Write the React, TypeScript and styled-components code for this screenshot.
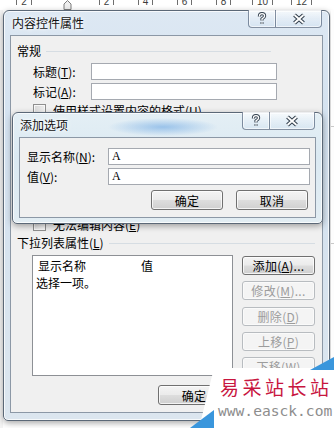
import React from 'react'
import styled, { createGlobalStyle } from 'styled-components'

const GlobalStyle = createGlobalStyle`
	html, body {
		margin: 0;
		padding: 0;
		background: #fff;
	}
	body {
		font-family: "Noto Sans CJK SC", sans-serif;
		font-size: 12px;
		color: #000;
	}
	* {
		box-sizing: border-box;
	}
`

const Screen = styled.div`
	position: relative;
	width: 334px;
	height: 428px;
	overflow: hidden;
	background: #fff;
`

const Ruler = styled.div`
	display: flex;
	height: 10px;
	overflow: hidden;
	background: #fff;
`

const RulerCell = styled.div<{ $w?: number }>`
	flex: none;
	width: ${p => p.$w ?? 39}px;
	display: flex;
	justify-content: center;
	align-items: flex-start;
	gap: 4px;
	margin-top: -4px;
	font-family: 'Liberation Sans', sans-serif;
	font-size: 10px;
	line-height: 11px;
	color: #3c3c3c;
`

const Tick = styled.span`
	width: 1px;
	height: 9px;
	background: #6e6e6e;
`

const Desk = styled.div`
	display: flex;
	height: 418px;
`

const Gutter = styled.div`
	flex: none;
	width: 3px;
	background: #f4f4f4;
`

const DocStrip = styled.div`
	flex: 1;
	margin-left: 1px;
	background: repeating-linear-gradient(
		to bottom,
		#fdfdfd 0,
		#fdfdfd 116px,
		#c9c9c9 116px,
		#c9c9c9 117px
	);
`

const Window = styled.div`
	flex: none;
	display: flex;
	flex-direction: column;
	border: 1px solid #5b6877;
	border-radius: 6px 6px 5px 5px;
	background: linear-gradient(180deg, #dde8f3 0%, #d3e1ef 30%, #dce6ef 100%);
	box-shadow: 0 2px 6px rgba(0, 0, 0, 0.35), inset 0 0 0 1px rgba(255, 255, 255, 0.75);
	padding: 0 6px 7px 6px;
`

const MainWindow = styled(Window)`
	width: 327px;
	height: 411px;
`

const OptionWindow = styled(Window)`
	position: absolute;
	left: 12px;
	top: 112px;
	width: 311px;
	height: 112px;
	padding-bottom: 5px;
	background:
		radial-gradient(ellipse 55px 9px at 150px 14px, rgba(96, 160, 226, 0.55), rgba(96, 160, 226, 0) 100%),
		linear-gradient(180deg, #e4eff5 0%, #dbe9f2 40%, #e2edf3 100%);
`

const TitleBar = styled.div`
	flex: none;
	height: 24px;
	display: flex;
	justify-content: space-between;
	align-items: flex-start;
`

const Title = styled.div<{ $indent: number }>`
	padding-left: ${p => p.$indent}px;
	line-height: 24px;
	color: #111;
	text-shadow: 0 0 6px #fff, 0 0 3px #fff;
`

const Captions = styled.div`
	display: flex;
	margin-top: -1px;
	margin-right: 1px;
`

const CaptionButton = styled.div<{ $w: number; $first?: boolean }>`
	width: ${p => p.$w}px;
	height: 18px;
	display: flex;
	align-items: center;
	justify-content: center;
	border: 1px solid rgba(58, 76, 102, 0.6);
	border-top: none;
	border-left-width: ${p => (p.$first ? 1 : 0)}px;
	border-radius: ${p => (p.$first ? '0 0 0 4px' : '0 0 4px 0')};
	background: linear-gradient(180deg, rgba(255, 255, 255, 0.75) 0%, rgba(232, 240, 248, 0.6) 50%, rgba(208, 224, 240, 0.55) 100%);
	box-shadow: inset 0 0 0 1px rgba(255, 255, 255, 0.6);
`

const Client = styled.div`
	flex: 1;
	display: flex;
	flex-direction: column;
	border: 1px solid #8c98a6;
	background: #f0f0f0;
`

const MainClient = styled(Client)`
	padding: 0 7px 0 6px;
`

const OptionClient = styled(Client)`
	padding: 10px 5px 0 7px;
	gap: 3px;
`

const SectionHead = styled.div<{ $top: number; $lineEnd?: number }>`
	display: flex;
	align-items: center;
	height: 14px;
	margin-top: ${p => p.$top}px;
	line-height: 14px;
	&::after {
		content: '';
		flex: 1;
		height: 1px;
		margin-left: 5px;
		margin-right: ${p => p.$lineEnd ?? 0}px;
		background: #d6dde3;
	}
`

const FieldRow = styled.div<{ $top?: number; $indent: number }>`
	display: flex;
	align-items: center;
	height: 17px;
	margin-top: ${p => p.$top ?? 0}px;
	padding-left: ${p => p.$indent}px;
`

const FieldLabel = styled.label<{ $w: number }>`
	flex: none;
	width: ${p => p.$w}px;
	line-height: 17px;
`

const TextBox = styled.div<{ $w?: number }>`
	${p => (p.$w ? `width: ${p.$w}px; flex: none;` : 'flex: 1;')}
	height: 17px;
	border: 1px solid #a5a9b0;
	background: #fff;
	padding-left: 3px;
	font-family: 'Liberation Serif', serif;
	font-size: 12px;
	line-height: 15px;
`

const CheckRow = styled.div<{ $top: number }>`
	display: flex;
	align-items: center;
	gap: 7px;
	height: 13px;
	margin-top: ${p => p.$top}px;
	padding-left: 16px;
	line-height: 13px;
`

const CheckBox = styled.span`
	flex: none;
	width: 13px;
	height: 13px;
	border: 1px solid #8f8f8f;
	background: linear-gradient(135deg, #d4d4d4 0%, #f2f2f2 70%, #fff 100%);
	box-shadow: inset 0 0 0 1px #f8f8f8;
`

const Key = styled.span`
	text-decoration: underline;
`

const ListArea = styled.div`
	display: flex;
	height: 121px;
	margin-top: 5px;
	padding-left: 15px;
`

const ListBox = styled.div`
	flex: none;
	width: 201px;
	border: 1px solid #8d9095;
	background: #fff;
	padding-left: 3px;
`

const ListHeader = styled.div`
	display: flex;
	height: 20px;
	padding-left: 2px;
	line-height: 20px;
`

const HeaderCell = styled.div<{ $w?: number }>`
	${p => (p.$w ? `width: ${p.$w}px;` : 'flex: 1;')}
`

const ListItem = styled.div`
	height: 14px;
	line-height: 14px;
`

const SideButtons = styled.div`
	display: flex;
	flex-direction: column;
	gap: 6.25px;
	margin-left: 9px;
	margin-top: 1px;
	width: 79px;
`

const Button = styled.div<{ $w?: number; $disabled?: boolean }>`
	flex: none;
	${p => (p.$w ? `width: ${p.$w}px;` : '')}
	height: ${p => (p.$w ? 20 : 19)}px;
	display: flex;
	align-items: center;
	justify-content: center;
	border: 1px solid ${p => (p.$disabled ? '#b8bcc0' : '#707070')};
	border-radius: 3px;
	background: ${p =>
		p.$disabled
			? '#f4f4f4'
			: 'linear-gradient(180deg, #f4f4f4 0%, #ebebeb 48%, #dddddd 52%, #cfcfcf 100%)'};
	box-shadow: inset 0 0 0 1px ${p => (p.$disabled ? '#fafafa' : 'rgba(255, 255, 255, 0.75)')};
	color: ${p => (p.$disabled ? '#9c9c9c' : '#000')};
	line-height: 17px;
	letter-spacing: 0.3px;
`

const ButtonRow = styled.div<{ $top: number; $gap: number; $right?: number }>`
	display: flex;
	justify-content: flex-end;
	gap: ${p => p.$gap}px;
	margin-top: ${p => p.$top}px;
	margin-right: ${p => p.$right ?? 0}px;
`

const Watermark = styled.div`
	position: absolute;
	left: 190px;
	top: 355px;
	width: 144px;
	height: 73px;
	padding: 20px 0 0 30px;
	display: flex;
	flex-direction: column;
`

const WatermarkShape = styled.svg`
	position: absolute;
	inset: 0;
`

const SiteName = styled.div`
	position: relative;
	font-family: 'Noto Sans CJK SC', sans-serif;
	font-size: 19px;
	line-height: 24px;
	letter-spacing: 3.5px;
	color: #c8163f;
	white-space: nowrap;
`

const SiteUrl = styled.div`
	position: relative;
	margin-left: -2px;
	margin-top: 5px;
	font-family: 'DejaVu Sans Mono', monospace;
	font-size: 14.6px;
	line-height: 14px;
	color: #8d8d8d;
	white-space: nowrap;
`

const HelpGlyph = () => (
	<svg width="10" height="13" viewBox="0 0 10 13">
		<path
			d="M2.4 4.4 Q2.4 1.6 5 1.6 Q7.6 1.6 7.6 4 Q7.6 5.4 5 6.9 L5 8.4 M5 10.3 L5 11.7"
			fill="none"
			stroke="#34414f"
			strokeWidth="3.2"
		/>
		<path
			d="M2.4 4.4 Q2.4 1.6 5 1.6 Q7.6 1.6 7.6 4 Q7.6 5.4 5 6.9 L5 8.4 M5 10.3 L5 11.7"
			fill="none"
			stroke="#fff"
			strokeWidth="1.3"
		/>
	</svg>
)

const CloseGlyph = () => (
	<svg width="14" height="12" viewBox="0 0 14 12">
		<path d="M2.5 2 L11.5 10 M11.5 2 L2.5 10" stroke="#34414f" strokeWidth="4" />
		<path d="M2.5 2 L11.5 10 M11.5 2 L2.5 10" stroke="#fff" strokeWidth="1.8" />
	</svg>
)

const RulerMarker = () => (
	<svg width="9" height="10" viewBox="0 0 9 10" style={{ marginTop: 4 }}>
		<path d="M1 9.5 L1 4 L4.5 0.5 L8 4 L8 9.5 Z" fill="#eeeeee" stroke="#7d7d7d" />
	</svg>
)

const Captions2 = ({ help, close }: { help: number; close: number }) => (
	<Captions>
		<CaptionButton $w={help} $first>
			<HelpGlyph />
		</CaptionButton>
		<CaptionButton $w={close}>
			<CloseGlyph />
		</CaptionButton>
	</Captions>
)

const rulerNumbers = ['4', '6', '8', '10', '12']

const App = () => (
	<Screen>
		<GlobalStyle />
		<Ruler>
			<RulerCell $w={48}>
				<Tick />
				<span>2</span>
				<Tick />
			</RulerCell>
			<RulerCell>
				<RulerMarker />
			</RulerCell>
			<RulerCell>
				<Tick />
				<span>2</span>
				<Tick />
			</RulerCell>
			{rulerNumbers.map(n => (
				<RulerCell key={n}>
					<Tick />
					<span>{n}</span>
					<Tick />
				</RulerCell>
			))}
		</Ruler>

		<Desk>
			<Gutter />
			<MainWindow>
				<TitleBar>
					<Title $indent={2}>内容控件属性</Title>
					<Captions2 help={28} close={46} />
				</TitleBar>
				<MainClient>
					<SectionHead $top={8} $lineEnd={44}>
						常规
					</SectionHead>
					<FieldRow $top={5} $indent={16}>
						<FieldLabel $w={58}>
							标题(<Key>T</Key>):
						</FieldLabel>
						<TextBox $w={186} />
					</FieldRow>
					<FieldRow $top={3} $indent={16}>
						<FieldLabel $w={58}>
							标记(<Key>A</Key>):
						</FieldLabel>
						<TextBox $w={186} />
					</FieldRow>
					<CheckRow $top={4}>
						<CheckBox />
						<span>
							使用样式设置内容的格式(<Key>U</Key>)
						</span>
					</CheckRow>
					<SectionHead $top={55}>锁定</SectionHead>
					<CheckRow $top={10}>
						<CheckBox />
						<span>
							无法删除内容控件(<Key>D</Key>)
						</span>
					</CheckRow>
					<CheckRow $top={9}>
						<CheckBox />
						<span>
							无法编辑内容(<Key>E</Key>)
						</span>
					</CheckRow>
					<SectionHead $top={5}>
						<span>
							下拉列表属性(<Key>L</Key>)
						</span>
					</SectionHead>
					<ListArea>
						<ListBox>
							<ListHeader>
								<HeaderCell $w={103}>显示名称</HeaderCell>
								<HeaderCell>值</HeaderCell>
							</ListHeader>
							<ListItem>选择一项。</ListItem>
						</ListBox>
						<SideButtons>
							<Button>
								添加(<Key>A</Key>)...
							</Button>
							<Button $disabled>
								修改(<Key>M</Key>)...
							</Button>
							<Button $disabled>
								删除(<Key>D</Key>)
							</Button>
							<Button $disabled>
								上移(<Key>P</Key>)
							</Button>
							<Button $disabled>
								下移(<Key>W</Key>)
							</Button>
						</SideButtons>
					</ListArea>
					<ButtonRow $top={9} $gap={7}>
						<Button $w={72}>确定</Button>
						<Button $w={78}>取消</Button>
					</ButtonRow>
				</MainClient>
			</MainWindow>
			<DocStrip />
		</Desk>

		<OptionWindow>
			<TitleBar>
				<Title $indent={1}>添加选项</Title>
				<Captions2 help={28} close={45} />
			</TitleBar>
			<OptionClient>
				<FieldRow $indent={0}>
					<FieldLabel $w={81}>
						显示名称(<Key>N</Key>):
					</FieldLabel>
					<TextBox>A</TextBox>
				</FieldRow>
				<FieldRow $indent={0}>
					<FieldLabel $w={81}>
						值(<Key>V</Key>):
					</FieldLabel>
					<TextBox>A</TextBox>
				</FieldRow>
				<ButtonRow $top={2} $gap={13} $right={2}>
					<Button $w={72}>确定</Button>
					<Button $w={72}>取消</Button>
				</ButtonRow>
			</OptionClient>
		</OptionWindow>

		<Watermark>
			<WatermarkShape width="144" height="73" viewBox="0 0 144 73">
				<polygon points="24,13 144,13 144,73 9,73" fill="#fff" />
				<polygon points="120,15 144,2 144,15" fill="#3a96dc" />
				<polygon points="0,73 24,55 24,73" fill="#3a96dc" />
			</WatermarkShape>
			<SiteName>易采站长站</SiteName>
			<SiteUrl>www.easck.com</SiteUrl>
		</Watermark>
	</Screen>
)

export default App
